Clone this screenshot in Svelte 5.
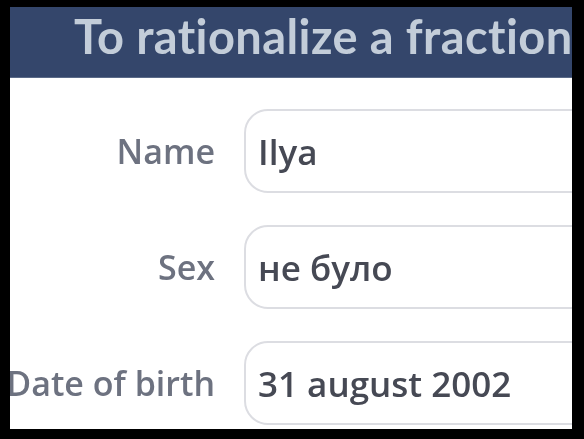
<script>
	const fields = [
		{ label: "Name", value: "Ilya" },
		{ label: "Sex", value: "не було" },
		{ label: "Date of birth", value: "31 august 2002" }
	];
</script>

<div class="screen">
	<div class="panel">
		<header>
			<h1>To rationalize a fraction</h1>
		</header>
		<form>
			{#each fields as field}
				<div class="row">
					<div class="label"><span>{field.label}</span></div>
					<div class="input"><span>{field.value}</span></div>
				</div>
			{/each}
		</form>
	</div>
</div>

<style>
	:global(body) {
		margin: 0;
		background: #000;
	}

	.screen {
		width: 584px;
		height: 439px;
		box-sizing: border-box;
		padding: 7px 12px 10px 10px;
		font-family: "Open Sans", "Noto Sans", sans-serif;
		overflow: hidden;
	}

	.panel {
		height: 100%;
		background: #fff;
		overflow: hidden;
	}

	header {
		height: 71px;
		background: #34466b;
		box-sizing: border-box;
		padding-left: 64px;
		border-bottom: 1px solid #5a6a88;
	}

	h1 {
		margin: 0;
		font-family: Lato, sans-serif;
		font-size: 47px;
		font-weight: 700;
		line-height: 58px;
		letter-spacing: 0.4px;
		color: #c3cdd9;
		white-space: nowrap;
		filter: blur(0.7px);
	}

	form {
		display: flex;
		flex-direction: column;
		gap: 32px;
		padding-top: 31px;
	}

	.row {
		display: flex;
		align-items: center;
		height: 84px;
	}

	.label {
		width: 205px;
		flex: none;
		display: flex;
		justify-content: flex-end;
		font-size: 34px;
		font-weight: 600;
		color: #6d7280;
		white-space: nowrap;
		filter: blur(0.7px);
	}

	.input {
		flex: 1;
		margin-left: 29px;
		height: 84px;
		box-sizing: border-box;
		padding-left: 12px;
		margin-right: -30px;
		border: 2px solid #dcdde2;
		border-radius: 24px;
		display: flex;
		align-items: center;
		font-size: 35px;
		font-weight: 600;
		color: #464954;
		white-space: nowrap;
	}

	.input span {
		filter: blur(0.7px);
	}
</style>
